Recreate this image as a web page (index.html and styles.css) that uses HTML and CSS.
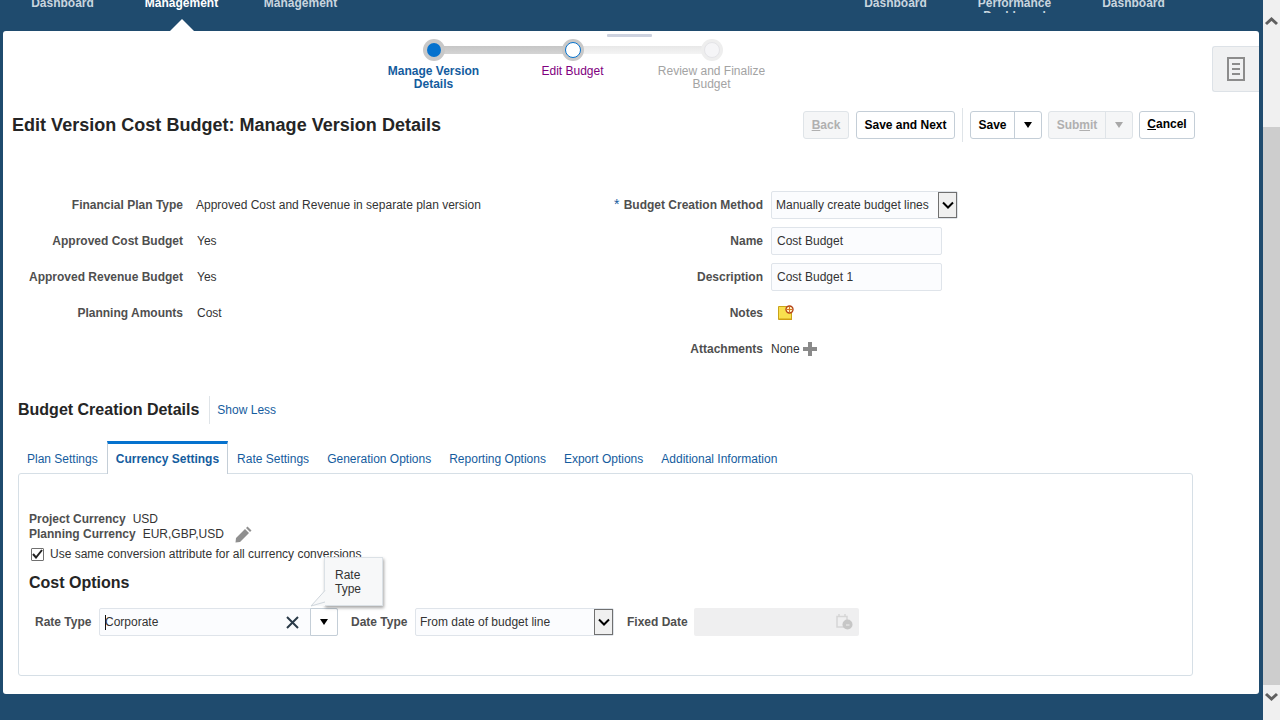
FILE: index.html
```html
<!DOCTYPE html>
<html lang="en">
<head>
    <meta charset="UTF-8">
    <title>Edit Version Cost Budget</title>
    <link rel="stylesheet" href="styles.css">
</head>
<body>
    <div class="shell">
        <nav class="topnav">
            <div class="nav-group">
                <a class="nav-item">Dashboard</a>
                <a class="nav-item active">Management</a>
                <a class="nav-item">Management</a>
            </div>
            <div class="nav-group">
                <a class="nav-item">Dashboard</a>
                <a class="nav-item">Performance Dashboard</a>
                <a class="nav-item">Dashboard</a>
            </div>
        </nav>

        <main class="panel">
            <div class="splitter-handle"></div>
            <div class="drawer-tab">
                <svg width="18" height="24" viewBox="0 0 18 24" fill="none" stroke="#8c8c8c" stroke-width="2">
                    <path d="M1 1H17V23H1Z"/>
                    <path d="M5 7H13M5 12H13M5 17H13"/>
                </svg>
            </div>

            <div class="train">
                <div class="step done">
                    <span class="dot"></span>
                    <span class="step-label">Manage Version Details</span>
                </div>
                <div class="step current">
                    <span class="dot"></span>
                    <span class="step-label">Edit Budget</span>
                </div>
                <div class="step todo">
                    <span class="dot"></span>
                    <span class="step-label">Review and Finalize Budget</span>
                </div>
            </div>

            <div class="page-head">
                <h1>Edit Version Cost Budget: Manage Version Details</h1>
                <div class="toolbar">
                    <button class="btn disabled"><u>B</u>ack</button>
                    <button class="btn next">Save and Next</button>
                    <span class="toolbar-sep"></span>
                    <div class="split">
                        <button class="btn-main">Save</button>
                        <button class="btn-caret"><i class="caret"></i></button>
                    </div>
                    <div class="split disabled">
                        <button class="btn-main">Sub<u>m</u>it</button>
                        <button class="btn-caret"><i class="caret"></i></button>
                    </div>
                    <button class="btn cancel"><u>C</u>ancel</button>
                </div>
            </div>

            <div class="form">
                <div class="form-col left">
                    <label>Financial Plan Type</label><span>Approved Cost and Revenue in separate plan version</span>
                    <label>Approved Cost Budget</label><span class="nudge">Yes</span>
                    <label>Approved Revenue Budget</label><span class="nudge">Yes</span>
                    <label>Planning Amounts</label><span class="nudge">Cost</span>
                </div>
                <div class="form-col right">
                    <label><em>*</em> Budget Creation Method</label>
                    <div class="select wide"><span>Manually create budget lines</span><i class="select-btn"><svg width="14" height="9" viewBox="0 0 14 9" fill="none" stroke="#000" stroke-width="2"><path d="M2 1.500L7 6.500L12 1.500"/></svg></i></div>
                    <label>Name</label><div class="field">Cost Budget</div>
                    <label>Description</label><div class="field">Cost Budget 1</div>
                    <label>Notes</label>
                    <div class="note-icon">
                        <svg width="17" height="16" viewBox="0 0 17 16">
                            <path d="M0.500 1.500H13.500V14.500H0.500Z" fill="#f8e04e" stroke="#c9a31a"/>
                            <path d="M1 13.500H14V15H1Z" fill="#cf9f12"/>
                            <circle cx="11.500" cy="4.500" r="3.500" fill="#fff4c4" stroke="#b5431a" stroke-width="1.400"/>
                            <path d="M11.500 2V7M9 4.500H14" stroke="#d9781e"/>
                        </svg>
                    </div>
                    <label>Attachments</label>
                    <div class="attach">None
                        <svg width="14" height="14" viewBox="0 0 14 14"><path d="M5 0H9V5H14V9H9V14H5V9H0V5H5Z" fill="#8a8a8a"/></svg>
                    </div>
                </div>
            </div>

            <div class="section-head">
                <h2>Budget Creation Details</h2>
                <a class="link">Show Less</a>
            </div>

            <div class="tabs">
                <a class="tab">Plan Settings</a>
                <a class="tab active">Currency Settings</a>
                <a class="tab">Rate Settings</a>
                <a class="tab">Generation Options</a>
                <a class="tab">Reporting Options</a>
                <a class="tab">Export Options</a>
                <a class="tab">Additional Information</a>
            </div>

            <div class="tab-box">
                <div class="currency-line"><label>Project Currency</label><span>USD</span></div>
                <div class="currency-line"><label>Planning Currency</label><span>EUR,GBP,USD</span>
                    <svg class="pencil" width="17" height="17" viewBox="0 0 17 17"><path d="M12.500 0.500L16.500 4.500L15 6L11 2ZM10 3L14 7L5 16L0.500 16.500L1 12Z" fill="#8f8f8f"/></svg>
                </div>
                <div class="check-line">
                    <span class="checkbox"><svg width="11" height="10" viewBox="0 0 11 10" fill="none" stroke="#222" stroke-width="2"><path d="M1 5L4 8.500L10 1"/></svg></span>
                    <span>Use same conversion attribute for all currency conversions</span>
                </div>
                <h3>Cost Options</h3>
                <div class="rate-row">
                    <label>Rate Type</label>
                    <div class="combo">
                        <span class="combo-text"><i class="cursor"></i>Corporate</span>
                        <svg class="clear" width="13" height="13" viewBox="0 0 13 13" fill="none" stroke="#2a3a48" stroke-width="2"><path d="M1 1L12 12M12 1L1 12"/></svg>
                        <span class="combo-btn"><i class="caret"></i></span>
                    </div>
                    <label>Date Type</label>
                    <div class="select date"><span>From date of budget line</span><i class="select-btn"><svg width="14" height="9" viewBox="0 0 14 9" fill="none" stroke="#000" stroke-width="2"><path d="M2 1.500L7 6.500L12 1.500"/></svg></i></div>
                    <label class="fixed">Fixed Date</label>
                    <div class="date-field">
                        <svg width="17" height="16" viewBox="0 0 17 16">
                            <path d="M1 2.500H11V9H8V13H1Z" fill="none" stroke="#d6d6d6" stroke-width="1.500"/>
                            <path d="M3 0V3M9 0V3" stroke="#d6d6d6" stroke-width="1.500"/>
                            <circle cx="11.500" cy="10.500" r="5" fill="#c6c6c6"/>
                            <path d="M10 11H13.500" stroke="#eee"/>
                        </svg>
                    </div>
                </div>
                <div class="tooltip">Rate Type
                    <svg class="tail" width="16" height="18" viewBox="0 0 16 18">
                        <path d="M15 1.500L1 17H15Z" fill="#f7f8f9"/>
                        <path d="M15 1.500L1 17L15 13" fill="none" stroke="#cfd6dc"/>
                    </svg>
                </div>
            </div>
        </main>
    </div>

    <div class="scrollbar">
        <svg width="17" height="10" viewBox="0 0 17 10" fill="none" stroke="#606060" stroke-width="3"><path d="M3 8L8.500 3L14 8"/></svg>
        <div class="thumb"></div>
        <svg width="17" height="10" viewBox="0 0 17 10" fill="none" stroke="#606060" stroke-width="3"><path d="M3 2L8.500 7L14 2"/></svg>
    </div>
</body>
</html>
```

FILE: styles.css
```css
* {
    box-sizing: border-box;
}
html, body {
    height: 720px;
    overflow: hidden;
}
body {
    margin: 0;
    display: flex;
    background-color: #1f4b6e;
    font-family: "Liberation Sans", Arial, sans-serif;
    font-size: 12px;
    color: #333;
}
.shell {
    width: 1263px;
    display: flex;
    flex-direction: column;
}

/* top navigation, clipped by the scroll position */
.topnav {
    height: 31px;
    padding-left: 3px;
    display: flex;
    justify-content: space-between;
    padding-right: 70px;
}
.nav-group {
    display: flex;
}
.nav-item {
    position: relative;
    width: 119px;
    height: 16px;
    margin-top: -3px;
    line-height: 13px;
    font-weight: bold;
    text-align: center;
    color: #c9d5df;
    overflow: hidden;
}
.nav-item.active {
    color: #fff;
    overflow: visible;
}
.nav-item.active::after {
    content: "";
    position: absolute;
    left: 48px;
    top: 22px;
    border-left: 12px solid transparent;
    border-right: 12px solid transparent;
    border-bottom: 12px solid #fff;
}

.panel {
    position: relative;
    width: 1256px;
    height: 663px;
    margin-left: 3px;
    background-color: #fff;
    border-radius: 3px;
    z-index: 1;
}
.splitter-handle {
    position: absolute;
    left: 604px;
    top: 3px;
    width: 45px;
    height: 3px;
    background-color: #cdd2df;
    border-radius: 1px;
}
.drawer-tab {
    position: absolute;
    right: 0;
    top: 15px;
    width: 47px;
    height: 46px;
    display: flex;
    align-items: center;
    justify-content: center;
    background-color: #f0f1f2;
    border: 1px solid #dde2e7;
    border-right: 0;
    border-radius: 3px 0 0 3px;
}

/* train */
.train {
    height: 80px;
    padding: 8px 0 0 361px;
    display: flex;
}
.step {
    position: relative;
    width: 139px;
    display: flex;
    flex-direction: column;
    align-items: center;
    text-align: center;
    line-height: 13px;
}
.step::after {
    content: "";
    position: absolute;
    left: 69px;
    top: 7px;
    width: 139px;
    height: 8px;
    background: linear-gradient(#c6c6c6, #d4d4d4);
}
.step.current::after {
    background: linear-gradient(#e8e8e8, #f4f4f4);
}
.step.todo::after {
    display: none;
}
.dot {
    position: relative;
    z-index: 1;
    width: 22px;
    height: 22px;
    margin: 0 0 4px 1px;
    border-radius: 50%;
    background-color: #c8c8c8;
    display: flex;
    align-items: center;
    justify-content: center;
}
.dot::before {
    content: "";
    width: 14px;
    height: 14px;
    border-radius: 50%;
    background-color: #0572ce;
}
.current .dot::before {
    background-color: #fff;
    border: 1px solid #0572ce;
}
.todo .dot {
    background-color: #eeeeee;
}
.todo .dot::before {
    background-color: #f5f5f7;
    border: 1px solid #e4e4e8;
}
.step-label {
    width: 120px;
}
.done .step-label {
    font-weight: bold;
    color: #145c9e;
}
.current .step-label {
    color: #800080;
}
.todo .step-label {
    color: #a3a3a3;
}

/* page header and buttons */
.page-head {
    height: 28px;
    padding: 0 64px 0 9px;
    display: flex;
    align-items: center;
    justify-content: space-between;
}
h1 {
    margin: 0;
    font-size: 18px;
    font-weight: bold;
    letter-spacing: 0.02px;
    color: #252525;
}
.toolbar {
    display: flex;
    align-items: center;
    gap: 6px;
}
button {
    font-family: inherit;
    font-size: 12px;
    font-weight: bold;
    color: #000;
    background: none;
    border: 0;
    padding: 0;
}
.btn {
    height: 28px;
    padding: 0;
    background-color: #fff;
    border: 1px solid #c4ced7;
    border-radius: 3px;
}
.btn.next {
    width: 99px;
}
.btn.disabled {
    width: 46px;
    color: #b0b0b0;
    background-color: #f5f6f7;
    border-color: #dfe4e8;
    margin-right: 1px;
}
.btn.cancel {
    width: 56px;
    padding-bottom: 2px;
}
.toolbar-sep {
    width: 1px;
    height: 34px;
    margin: 0 1px;
    background-color: #dfe4e8;
}
.split {
    display: flex;
    height: 28px;
    background-color: #fff;
    border: 1px solid #c4ced7;
    border-radius: 3px;
}
.btn-main {
    width: 44px;
    border-right: 1px solid #c4ced7;
}
.btn-caret {
    width: 26px;
    display: flex;
    align-items: center;
    justify-content: center;
}
.split.disabled {
    background-color: #f5f6f7;
    border-color: #dfe4e8;
}
.split.disabled .btn-main {
    width: 57px;
    color: #b0b0b0;
    border-right-color: #dfe4e8;
}
.split.disabled .caret {
    border-top-color: #a8a8a8;
}
.caret {
    display: block;
    border-left: 4.5px solid transparent;
    border-right: 4.5px solid transparent;
    border-top: 6px solid #000;
}

/* form */
label {
    font-weight: bold;
    color: #4f4f4f;
}
.form {
    margin-top: 48px;
    display: flex;
    height: 180px;
}
.form-col {
    display: grid;
    grid-auto-rows: 36px;
    align-items: center;
}
.form-col label {
    text-align: right;
}
.form-col.left {
    width: 600px;
    grid-template-columns: 180px 1fr;
    column-gap: 13px;
}
.nudge {
    padding-left: 1px;
}
.form-col.right {
    grid-template-columns: 160px 1fr;
    column-gap: 8px;
}
.form-col em {
    font-style: normal;
    font-weight: normal;
    color: #145c9e;
    font-size: 14px;
    line-height: 1px;
    margin-right: 1px;
}
.select {
    height: 28px;
    display: flex;
    align-items: center;
    justify-content: space-between;
    padding-left: 4px;
    background-color: #fbfcfe;
    border: 1px solid #dfe4ea;
    border-radius: 2px;
}
.select.wide {
    width: 187px;
}
.select.date {
    width: 199px;
    margin-right: 6px;
}
.select-btn {
    width: 19px;
    height: 26px;
    display: flex;
    align-items: center;
    justify-content: center;
    background-color: #f0f0f0;
    border: 1px solid #707070;
}
.field {
    width: 171px;
    height: 28px;
    line-height: 26px;
    padding-left: 5px;
    background-color: #fbfcfe;
    border: 1px solid #dfe4ea;
    border-radius: 2px;
}
.note-icon {
    padding-left: 7px;
    height: 16px;
}
.attach {
    display: flex;
    align-items: center;
    gap: 3px;
}

/* section and tabs */
.section-head {
    margin: 29px 0 0 15px;
    height: 28px;
    display: flex;
    align-items: center;
}
h2 {
    margin: 0;
    padding-right: 10px;
    height: 28px;
    line-height: 28px;
    border-right: 1px solid #dfe4e8;
    font-size: 16px;
    color: #252525;
}
.link {
    margin-left: 7px;
    color: #145c9e;
}
.tabs {
    margin: 17px 0 0 15px;
    height: 33px;
    display: flex;
    position: relative;
    z-index: 1;
}
.tab {
    padding: 0 9px;
    height: 33px;
    line-height: 36px;
    color: #145c9e;
}
.tab.active {
    padding: 0 8px;
    line-height: 30px;
    font-weight: bold;
    background-color: #fff;
    border: 1px solid #c4ced7;
    border-top: 3px solid #0572ce;
    border-bottom: 0;
}
.tab-box {
    position: relative;
    width: 1175px;
    height: 203px;
    margin: -1px 0 0 15px;
    padding: 38px 10px 0;
    border: 1px solid #d6dfe6;
    border-radius: 3px;
}
.currency-line {
    height: 15px;
    line-height: 15px;
    display: flex;
    align-items: center;
    gap: 7px;
}
.currency-line .pencil {
    margin: 0 0 0 4px;
}
.check-line {
    margin-top: 3px;
    height: 18px;
    display: flex;
    align-items: center;
    gap: 6px;
}
.checkbox {
    width: 13px;
    height: 13px;
    display: flex;
    align-items: center;
    justify-content: center;
    margin-left: 2px;
    background-color: #fff;
    border: 1px solid #707070;
    border-radius: 1px;
}
h3 {
    margin: 10px 0 0;
    height: 20px;
    line-height: 20px;
    font-size: 16px;
    color: #252525;
}
.rate-row {
    margin: 15px 0 0 6px;
    height: 28px;
    display: flex;
    align-items: center;
    gap: 7px;
}
.rate-row label {
    width: 57px;
}
.rate-row label.fixed {
    width: 61px;
}
.combo {
    width: 239px;
    height: 28px;
    margin-right: 6px;
    display: flex;
    align-items: center;
    background-color: #fbfcfe;
    border: 1px solid #dfe4ea;
    border-radius: 2px;
}
.combo-text {
    flex: 1;
    padding-left: 5px;
    display: flex;
    align-items: center;
}
.cursor {
    width: 1px;
    height: 15px;
    margin-right: -1px;
    background-color: #111;
}
.clear {
    margin-right: 11px;
}
.combo-btn {
    width: 28px;
    height: 28px;
    margin-right: -1px;
    display: flex;
    align-items: center;
    justify-content: center;
    background-color: #fff;
    border: 1px solid #c4ced7;
    border-radius: 0 2px 2px 0;
}
.date-field {
    width: 165px;
    height: 28px;
    margin-left: -1px;
    padding-right: 6px;
    display: flex;
    align-items: center;
    justify-content: flex-end;
    background-color: #efeff0;
    border-radius: 2px;
}
.tooltip {
    position: absolute;
    left: 305px;
    top: 83px;
    width: 59px;
    height: 49px;
    padding: 10px 10px;
    line-height: 14px;
    background-color: #f7f8f9;
    border: 1px solid #dbe1e6;
    box-shadow: 1px 2px 3px rgba(0, 0, 0, 0.35);
}
.tail {
    position: absolute;
    left: -15px;
    bottom: -2px;
}

.scrollbar {
    width: 17px;
    height: 720px;
    display: flex;
    flex-direction: column;
    align-items: center;
    background-color: #f0f0f0;
    padding-top: 16px;
}
.thumb {
    width: 17px;
    height: 558px;
    margin: 101px 0 7px;
    background-color: #cdcdcd;
}
```
